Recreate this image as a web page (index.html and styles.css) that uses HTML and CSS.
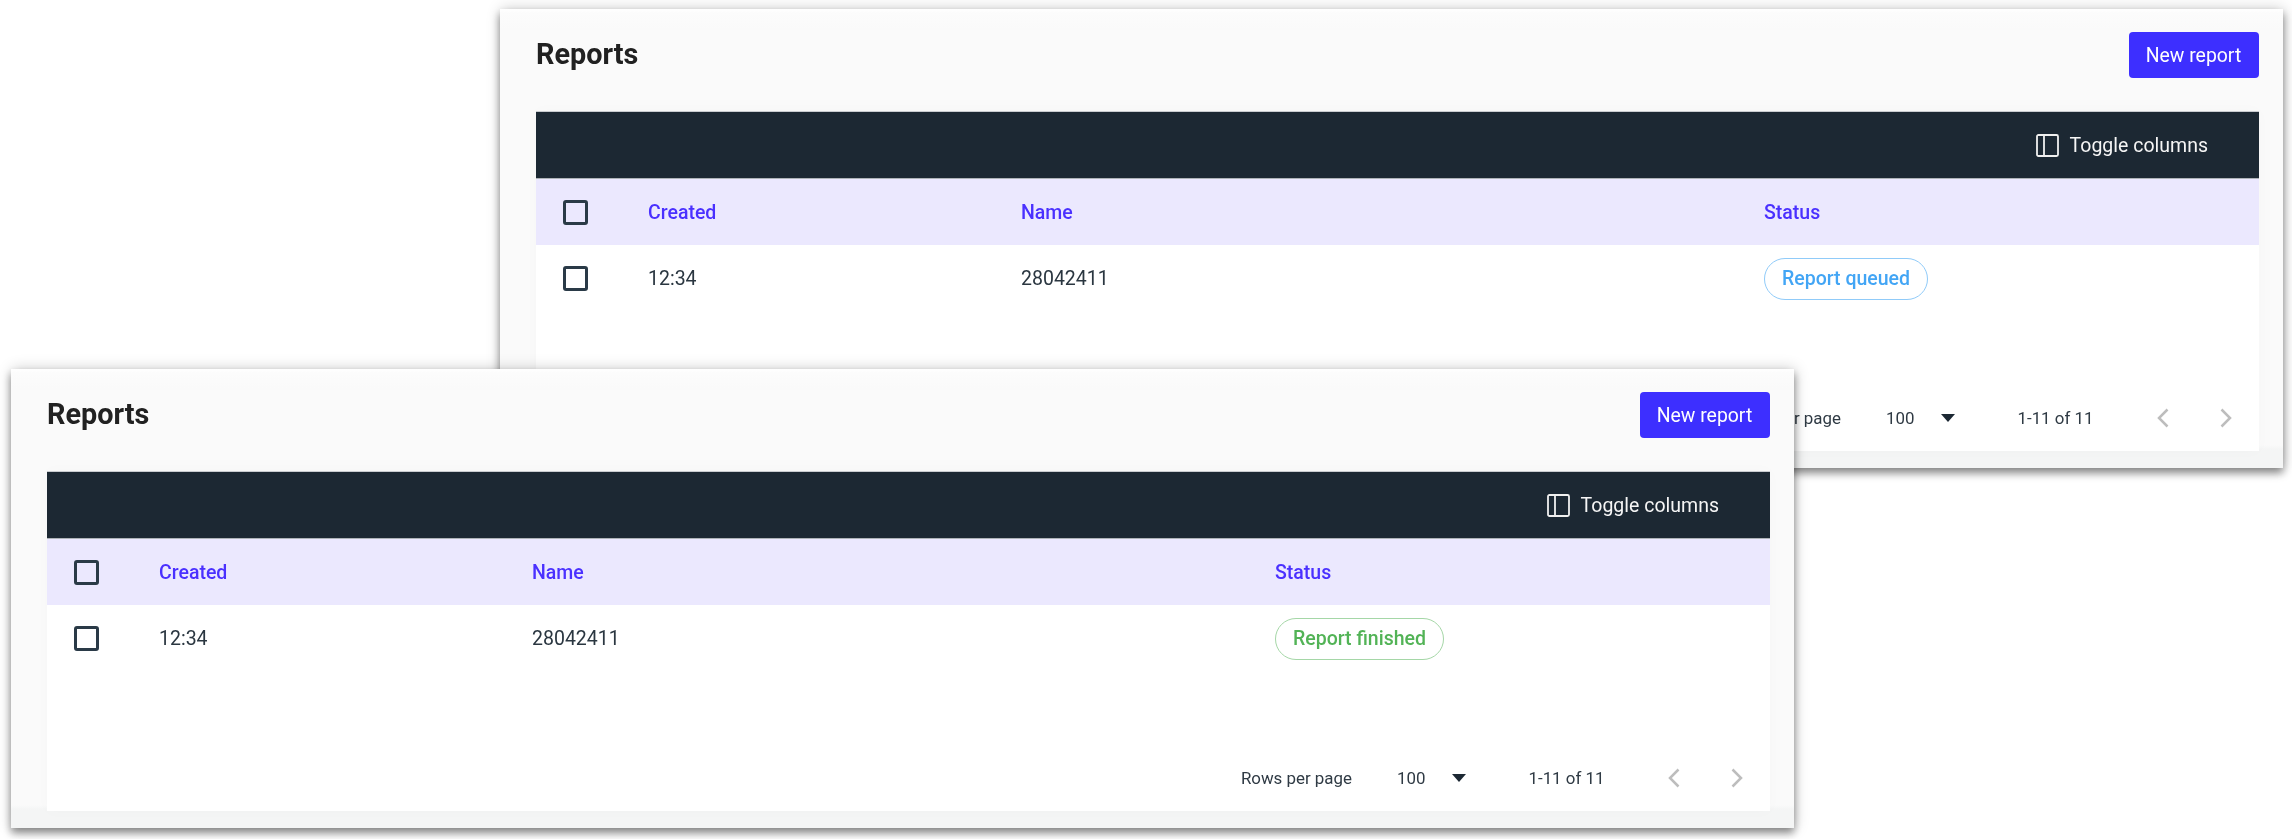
FILE: index.html
```html
<!DOCTYPE html>
<html lang="en">
<head>
<meta charset="utf-8">
<title>Reports</title>
<link rel="stylesheet" href="styles.css">
</head>
<body>
<main class="desktop">
  <section class="window window-back">
    <header class="window-head">
      <h1 class="window-title">Reports</h1>
      <button class="primary-btn" type="button">New report</button>
    </header>
    <div class="table-card">
      <div class="toolbar">
        <span class="toggle">
          <svg class="toggle-icon" viewBox="0 0 23 23" aria-hidden="true"><rect x="1" y="1" width="21" height="21" rx="1.500"/><path d="M8 1v21"/></svg>
          Toggle columns
        </span>
      </div>
      <div class="grid-row grid-head">
        <span class="checkbox"></span><span>Created</span><span>Name</span><span>Status</span>
      </div>
      <div class="grid-row grid-body">
        <span class="checkbox"></span><span>12:34</span><span>28042411</span>
        <span><span class="pill pill-queued">Report queued</span></span>
      </div>
      <footer class="pager">
        <span class="pager-label">Rows per page</span>
        <span class="pager-size">100</span>
        <svg class="pager-caret" viewBox="0 0 14 8" aria-hidden="true"><path d="M0 0h14L7 8z"/></svg>
        <span class="pager-range">1-11 of 11</span>
        <svg class="pager-arrow" viewBox="0 0 12 20" aria-hidden="true"><path d="M10.500 1.500 2 10l8.500 8.500"/></svg>
        <svg class="pager-arrow pager-next" viewBox="0 0 12 20" aria-hidden="true"><path d="M1.500 1.500 10 10l-8.500 8.500"/></svg>
      </footer>
    </div>
  </section>
  <section class="window window-front">
    <header class="window-head">
      <h1 class="window-title">Reports</h1>
      <button class="primary-btn" type="button">New report</button>
    </header>
    <div class="table-card">
      <div class="toolbar">
        <span class="toggle">
          <svg class="toggle-icon" viewBox="0 0 23 23" aria-hidden="true"><rect x="1" y="1" width="21" height="21" rx="1.500"/><path d="M8 1v21"/></svg>
          Toggle columns
        </span>
      </div>
      <div class="grid-row grid-head">
        <span class="checkbox"></span><span>Created</span><span>Name</span><span>Status</span>
      </div>
      <div class="grid-row grid-body">
        <span class="checkbox"></span><span>12:34</span><span>28042411</span>
        <span><span class="pill pill-finished">Report finished</span></span>
      </div>
      <footer class="pager">
        <span class="pager-label">Rows per page</span>
        <span class="pager-size">100</span>
        <svg class="pager-caret" viewBox="0 0 14 8" aria-hidden="true"><path d="M0 0h14L7 8z"/></svg>
        <span class="pager-range">1-11 of 11</span>
        <svg class="pager-arrow" viewBox="0 0 12 20" aria-hidden="true"><path d="M10.500 1.500 2 10l8.500 8.500"/></svg>
        <svg class="pager-arrow pager-next" viewBox="0 0 12 20" aria-hidden="true"><path d="M1.500 1.500 10 10l-8.500 8.500"/></svg>
      </footer>
    </div>
  </section>
</main>
</body>
</html>
```

FILE: styles.css
```css
* { box-sizing: border-box; }
html, body { margin: 0; height: 100%; background: #fff; }
body { font-family: Roboto, "Liberation Sans", sans-serif; color: #2a3640; overflow: hidden; }

.desktop { position: relative; width: 2292px; height: 839px; overflow: hidden; }

.window {
  position: absolute;
  width: 1783px;
  height: 459px;
  padding: 22px 24.500px 17px 36px;
  display: flex;
  flex-direction: column;
  background: linear-gradient(#fff, #fcfcfc 4px, #fafafa 20px, #fafafa 95%, #f4f5f5 96%);
  box-shadow: 0 5px 8px rgba(0, 0, 0, .42), 1px 0 14px rgba(0, 0, 0, .2);
  filter: blur(.35px);
}
.window-back { left: 500px; top: 9px; }
.window-front { left: 11px; top: 369px; }

.window-head {
  flex: 0 0 auto;
  height: 80px;
  display: flex;
  justify-content: space-between;
  align-items: flex-start;
}
.window-title {
  margin: 6px 0 0;
  font-size: 28.800px;
  line-height: 34px;
  font-weight: 700;
  color: #212121;
}
.primary-btn {
  width: 130px;
  height: 46px;
  margin-top: 1px;
  border: 0;
  border-radius: 4px;
  background: #3d2fff;
  color: #fff;
  font: 400 19.400px Roboto, sans-serif;
}

.table-card { flex: 1; display: flex; flex-direction: column; background: #fff; box-shadow: 0 0 14px rgba(0, 0, 0, .02); }

.toolbar {
  flex: 0 0 68px;
  display: flex;
  justify-content: flex-end;
  align-items: center;
  padding-right: 50.500px;
  background: #1c2833;
  border-top: 1px solid #c9ccd0;
  border-bottom: 1px solid #aeb3b8;
}
.toggle { display: flex; align-items: center; gap: 11px; color: #f5f5f5; font-size: 19.500px; font-weight: 400; }
.toggle-icon { width: 23px; height: 23px; fill: none; stroke: #f0f0f0; stroke-width: 1.800; }

.grid-row {
  display: grid;
  grid-template-columns: 112px 373px 743px 1fr;
  align-items: center;
  font-size: 19.500px;
}
.grid-row > .checkbox { margin-left: 27px; }
.grid-head { flex: 0 0 66px; background: #ebe8fe; color: #4a30ff; font-weight: 500; }
.grid-body { flex: 0 0 67px; color: #2a3640; }

.checkbox {
  display: block;
  width: 25px;
  height: 25px;
  border: 3px solid #2a3a47;
  border-radius: 3px;
}

.pill {
  display: inline-flex;
  align-items: center;
  height: 42px;
  padding: 0 17px;
  border: 1.500px solid;
  border-radius: 21px;
  font-weight: 500;
  background: #fff;
}
.pill-finished { color: #52b356; border-color: #a5d7a7; }
.pill-queued { color: #42a5f5; border-color: #90cbf9; }

.pager {
  margin-top: auto;
  flex: 0 0 auto;
  height: 66px;
  display: flex;
  align-items: center;
  justify-content: flex-end;
  padding-right: 27px;
  font-size: 16.900px;
  color: #2f3a44;
}
.pager-size { margin-left: 45px; }
.pager-caret { width: 14px; height: 8px; margin-left: 27px; fill: #1c2833; }
.pager-range { margin-left: 62px; }
.pager-arrow { width: 12px; height: 20px; margin-left: 63px; fill: none; stroke: #bdbdbd; stroke-width: 2.500; }
.pager-next { margin-left: 51px; }
```
